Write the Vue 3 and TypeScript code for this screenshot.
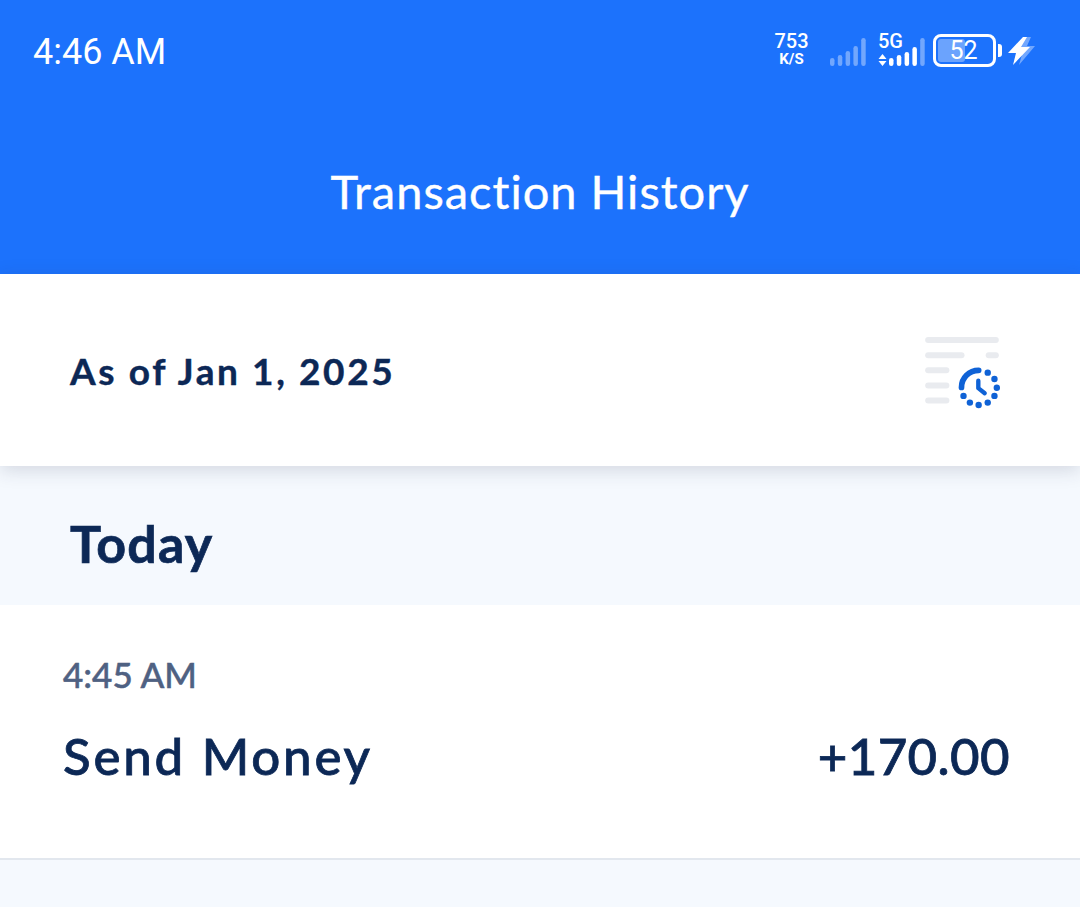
<script setup lang="ts">
const weakBars = [8, 11, 15, 20, 28]
const netBars = [8, 11, 14, 19]
const clockDots = [
  [234, 142], [254, 161], [261, 187], [254, 211], [234, 231], [207, 238], [181, 231], [162, 211],
]
</script>

<template>
  <div class="screen">
    <header class="top">
      <div class="status">
        <span class="clock">4:46 AM</span>
        <div class="indicators">
          <div class="speed">
            <span class="speed-num">753</span>
            <span class="speed-unit">K/S</span>
          </div>
          <svg class="bars-weak" width="37" height="28" viewBox="0 0 37 28">
            <rect
              v-for="(h, i) in weakBars"
              :key="i"
              :x="i * 7.8"
              :y="28 - h"
              width="4.5"
              :height="h"
              rx="2.25"
              fill="#fff"
              fill-opacity="0.38"
            />
          </svg>
          <div class="network">
            <div class="net-left">
              <span class="net-label">5G</span>
              <svg width="9" height="12" viewBox="0 0 9 12">
                <path d="M4.5 0 8.5 5H.5zM4.5 12 .5 7h8z" fill="#fff" />
              </svg>
            </div>
            <svg class="net-bars" width="36" height="28" viewBox="0 0 36 28">
              <rect
                v-for="(h, i) in netBars"
                :key="i"
                :x="i * 7.8"
                :y="28 - h"
                width="4.5"
                :height="h"
                rx="2.25"
                fill="#fff"
              />
              <rect x="31.2" y="0" width="4.5" height="28" rx="2.25" fill="#fff" fill-opacity="0.38" />
            </svg>
          </div>
          <div class="battery">
            <div class="battery-body">
              <div class="battery-fill"></div>
              <span class="battery-num">52</span>
            </div>
            <div class="battery-cap"></div>
          </div>
          <svg class="bolt" width="27" height="28" viewBox="0 0 27 28">
            <path d="M18 0 8 14h7l-4 14L27 9h-8l4-9z" fill="#fff" fill-opacity="0.38" />
            <path d="M15 0 0 16h8L5 28 22 10h-9l6-10z" fill="#fff" />
          </svg>
        </div>
      </div>
      <h1 class="title">Transaction History</h1>
    </header>

    <section class="as-of">
      <span class="as-of-text">As of Jan 1, 2025</span>
      <svg class="history-icon" width="75" height="72" viewBox="48 36 222 214">
        <g fill="#e9ebef">
          <rect x="48" y="36" width="219" height="18" rx="9" />
          <rect x="48" y="81" width="117" height="18" rx="9" />
          <rect x="228" y="81" width="39" height="18" rx="9" />
          <rect x="48" y="126" width="72" height="18" rx="9" />
          <rect x="48" y="171" width="72" height="18" rx="9" />
          <rect x="48" y="216" width="72" height="18" rx="9" />
        </g>
        <path
          d="M156 186a51 51 0 0 1 51-51"
          fill="none"
          stroke="#0f62d6"
          stroke-width="17"
          stroke-linecap="round"
        />
        <path
          d="M206 166v22l19 15"
          fill="none"
          stroke="#0f62d6"
          stroke-width="13"
          stroke-linecap="round"
          stroke-linejoin="round"
        />
        <circle v-for="(d, i) in clockDots" :key="i" :cx="d[0]" :cy="d[1]" r="9.5" fill="#0f62d6" />
      </svg>
    </section>

    <div class="day">Today</div>

    <section class="row">
      <span class="row-time">4:45 AM</span>
      <div class="row-main">
        <span class="row-name">Send Money</span>
        <span class="row-amount">+170.00</span>
      </div>
    </section>
  </div>
</template>

<style>
html,
body {
  margin: 0;
  background: #f5f9fe;
}
</style>

<style scoped>
.screen {
  width: 1080px;
  height: 907px;
  overflow: hidden;
  background: #f5f9fe;
  font-family: Lato, 'Open Sans', sans-serif;
  font-variant-ligatures: none;
  color: #0c2856;
}

.top {
  height: 274px;
  box-sizing: border-box;
  padding: 29px 45px 0 33px;
  background: #1c72fc;
  color: #fff;
}

.status {
  display: flex;
  justify-content: space-between;
  align-items: flex-start;
  height: 46px;
}

.clock {
  font-family: Roboto, sans-serif;
  font-size: 36px;
  line-height: 46px;
}

.indicators {
  display: flex;
  align-items: flex-end;
  height: 33px;
  margin-top: 5px;
  font-family: Roboto, sans-serif;
}

.speed {
  display: flex;
  flex-direction: column;
  align-items: center;
  gap: 6px;
  width: 33px;
  margin-bottom: 2px;
  font-weight: 500;
}

.speed-num {
  font-size: 20px;
  line-height: 14px;
}

.speed-unit {
  font-size: 15px;
  line-height: 11px;
  font-weight: 700;
}

.bars-weak {
  margin: 0 0 1px 22px;
}

.network {
  display: flex;
  align-items: flex-end;
  margin: 0 0 1px 11px;
}

.net-left {
  display: flex;
  flex-direction: column;
  align-items: flex-start;
  width: 24px;
  gap: 5px;
}

.net-label {
  font-size: 20px;
  font-weight: 500;
  line-height: 15px;
}

.net-bars {
  margin-left: -13px;
}

.battery {
  display: flex;
  align-items: center;
  margin-left: 8px;
}

.battery-body {
  position: relative;
  display: flex;
  align-items: center;
  justify-content: center;
  box-sizing: border-box;
  width: 63px;
  height: 33px;
  padding-right: 2px;
  border: 3px solid #fff;
  border-radius: 8px;
}

.battery-fill {
  position: absolute;
  left: 2px;
  top: 2px;
  bottom: 2px;
  width: 27px;
  border-radius: 3px;
  background: rgba(255, 255, 255, 0.35);
}

.battery-num {
  position: relative;
  font-size: 25px;
  line-height: 1;
}

.battery-cap {
  width: 4px;
  height: 13px;
  margin-left: 2px;
  border-radius: 0 3px 3px 0;
  background: #fff;
}

.bolt {
  margin: 0 0 2px 6px;
}

.title {
  margin: 88px 0 0 -33px;
  width: 1080px;
  text-align: center;
  font-size: 47px;
  font-weight: 400;
  line-height: 56px;
  letter-spacing: 1px;
  -webkit-text-stroke: 0.4px #fff;
}

.as-of {
  position: relative;
  display: flex;
  align-items: center;
  justify-content: space-between;
  height: 192px;
  box-sizing: border-box;
  padding: 0 80px 0 70px;
  background: #fff;
  box-shadow: 0 4px 18px rgba(40, 50, 80, 0.17);
}

.history-icon {
  margin-top: 6px;
}

.as-of-text {
  font-size: 37px;
  font-weight: 700;
  letter-spacing: 2.6px;
  -webkit-text-stroke: 0.4px #0c2856;
}

.day {
  display: flex;
  align-items: center;
  height: 139px;
  box-sizing: border-box;
  padding: 14px 0 0 70px;
  font-size: 52px;
  font-weight: 700;
  letter-spacing: 1.2px;
  -webkit-text-stroke: 0.7px #0c2856;
}

.row {
  display: flex;
  flex-direction: column;
  height: 255px;
  box-sizing: border-box;
  padding: 48px 70px 0 63px;
  background: #fff;
  border-bottom: 2px solid #e2e7ee;
}

.row-time {
  font-size: 35px;
  font-weight: 500;
  line-height: 42px;
  color: #4f6182;
  -webkit-text-stroke: 0.5px #4f6182;
}

.row-main {
  display: flex;
  justify-content: space-between;
  align-items: center;
  margin-top: 30px;
  font-size: 51px;
  line-height: 62px;
  font-weight: 500;
  -webkit-text-stroke: 0.8px #0c2856;
}

.row-name {
  letter-spacing: 2.8px;
}

.row-amount {
  letter-spacing: 0.4px;
}
</style>
